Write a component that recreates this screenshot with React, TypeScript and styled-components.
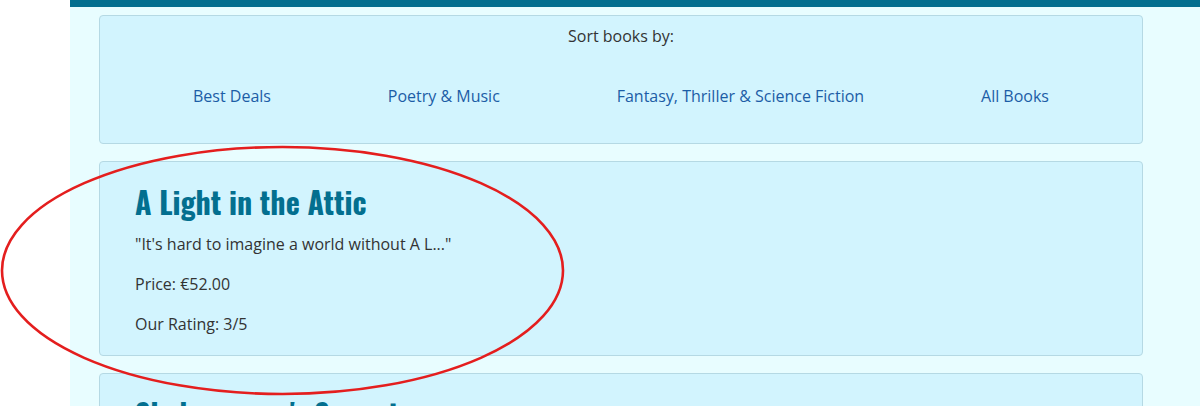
import React from "react";
import styled, { createGlobalStyle } from "styled-components";

const GlobalStyle = createGlobalStyle`
  html, body {
    margin: 0;
    padding: 0;
    background: #ffffff;
  }
  body {
    font-family: "Open Sans", "Liberation Sans", sans-serif;
    font-size: 16px;
    color: #333333;
    overflow: hidden;
  }
`;

const Page = styled.div`
  position: relative;
  margin-left: 70px;
  min-height: 406px;
  background: #e8fdff;
  border-top: 7px solid #036f8f;
  padding: 8px 57px 0 29px;
  display: flex;
  flex-direction: column;
  gap: 17px;
`;

const Card = styled.div`
  background: #d2f4fe;
  border: 1px solid #b5d9e4;
  border-radius: 4px;
`;

const SortCard = styled(Card)`
  padding: 8px 93px 35px;
  text-align: center;
`;

const SortLabel = styled.div`
  line-height: 24px;
`;

const SortLinks = styled.nav`
  margin-top: 36px;
  display: flex;
  justify-content: space-between;
  line-height: 24px;
`;

const SortLink = styled.a`
  color: #1c5da6;
  text-decoration: none;
`;

const BookCard = styled(Card)`
  padding: 20px 35px 19px;
`;

const BookTitle = styled.h2`
  margin: 0 0 10px;
  font-family: "Oswald", "Liberation Sans Narrow", "DejaVu Sans Condensed", sans-serif;
  font-stretch: condensed;
  font-weight: 700;
  font-size: 30px;
  line-height: 40px;
  color: #036f8f;
`;

const BookLine = styled.p`
  margin: 0 0 16px;
  line-height: 24px;
  &:last-child {
    margin-bottom: 0;
  }
`;

const Highlight = styled.svg`
  position: absolute;
  left: -70px;
  top: -7px;
  pointer-events: none;
  overflow: visible;
`;

const books = [
  {
    title: "A Light in the Attic",
    blurb: "\"It's hard to imagine a world without A L...\"",
    price: "€52.00",
    rating: "3/5",
  },
  {
    title: "Shakespeare's Sonnets",
    blurb: "\"This book is an important and complete ...\"",
    price: "€20.66",
    rating: "4/5",
  },
];

export default function App() {
  return (
    <>
      <GlobalStyle />
      <Page>
        <SortCard>
          <SortLabel>Sort books by:</SortLabel>
          <SortLinks>
            <SortLink href="#">Best Deals</SortLink>
            <SortLink href="#">Poetry &amp; Music</SortLink>
            <SortLink href="#">Fantasy, Thriller &amp; Science Fiction</SortLink>
            <SortLink href="#">All Books</SortLink>
          </SortLinks>
        </SortCard>
        {books.map((b) => (
          <BookCard key={b.title}>
            <BookTitle>{b.title}</BookTitle>
            <BookLine>{b.blurb}</BookLine>
            <BookLine>Price: {b.price}</BookLine>
            <BookLine>Our Rating: {b.rating}</BookLine>
          </BookCard>
        ))}
        <Highlight width="1200" height="406">
          <ellipse
            cx="282.5"
            cy="270.5"
            rx="280.5"
            ry="123.5"
            fill="none"
            stroke="#e41e1e"
            strokeWidth="2.6"
          />
        </Highlight>
      </Page>
    </>
  );
}
